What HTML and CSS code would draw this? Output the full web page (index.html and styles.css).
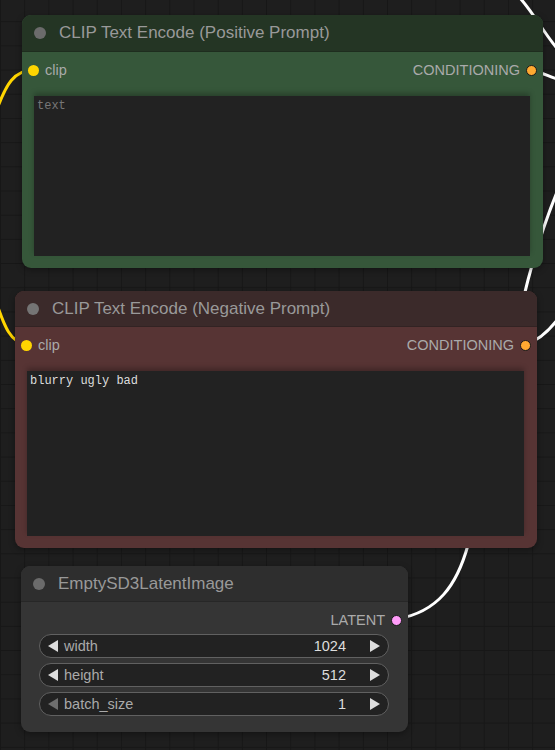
FILE: index.html
```html
<!DOCTYPE html>
<html lang="en">
<head>
   <meta charset="utf-8"/>
   <title>graph</title>
   <link rel="stylesheet" href="styles.css">
</head>
<body>
   <div class="canvas">
      <svg class="links" width="555" height="750" viewBox="0 0 555 750">
         <path class="link clip" d="M 34 70 C 14 70, 6 84, -4 112"/>
         <path class="link clip" d="M -6 296 C 2 318, 8 344, 27 344"/>
         <path class="link" d="M 520 -2 C 535 15, 545 35, 560 52"/>
         <path class="link" d="M 531 70 C 540 72, 548 76, 560 80"/>
         <path class="link" d="M 526 344 C 540 340, 550 330, 560 316"/>
         <path class="link" d="M 397 619 C 438 612, 457 585, 468 545 C 485 480, 515 330, 528 280 C 536 250, 545 220, 560 185"/>
      </svg>

      <div class="node green pos">
         <div class="title"><span class="knob"></span>CLIP Text Encode (Positive Prompt)</div>
         <div class="body">
            <div class="slots">
               <div class="slot"><i class="dot yellow"></i>clip</div>
               <div class="slot">CONDITIONING<i class="dot orange"></i></div>
            </div>
            <textarea class="prompt" placeholder="text"></textarea>
         </div>
      </div>

      <div class="node red neg">
         <div class="title"><span class="knob"></span>CLIP Text Encode (Negative Prompt)</div>
         <div class="body">
            <div class="slots">
               <div class="slot"><i class="dot yellow"></i>clip</div>
               <div class="slot">CONDITIONING<i class="dot orange"></i></div>
            </div>
            <textarea class="prompt">blurry ugly bad</textarea>
         </div>
      </div>

      <div class="node latent">
         <div class="title"><span class="knob"></span>EmptySD3LatentImage</div>
         <div class="body">
            <div class="slots">
               <div class="slot"></div>
               <div class="slot">LATENT<i class="dot pink"></i></div>
            </div>
            <div class="widgets">
               <div class="widget"><i class="arrow left"></i><span class="label">width</span><span class="value">1024</span><i class="arrow right"></i></div>
               <div class="widget"><i class="arrow left"></i><span class="label">height</span><span class="value">512</span><i class="arrow right"></i></div>
               <div class="widget"><i class="arrow left off"></i><span class="label">batch_size</span><span class="value">1</span><i class="arrow right"></i></div>
            </div>
         </div>
      </div>
   </div>
</body>
</html>
```

FILE: styles.css
```css
body {
   margin:0;
   background:#1d1d1d;
   font-family:"Liberation Sans",Arial,sans-serif;
   overflow:hidden;
}
.canvas {
   position:relative;
   width:555px;
   height:750px;
   overflow:hidden;
   background-color:#1e1e1e;
   background-image:
      linear-gradient(#171717 1px, transparent 1px),
      linear-gradient(90deg, #171717 1px, transparent 1px);
   background-size:24.2px 24.2px;
   background-position:0 -3px;
}
.links {
   position:absolute;
   left:0;
   top:0;
}
.link {
   fill:none;
   stroke:#fff;
   stroke-width:3;
   stroke-linecap:round;
}
.link.clip {
   stroke:#ffd500;
}

/* nodes */
.node {
   position:absolute;
   display:flex;
   flex-direction:column;
   border-radius:9px;
   overflow:hidden;
   background:#353535;
   box-shadow:0 2px 6px rgba(0,0,0,0.35);
}
.pos { left:22px; top:15px; width:521px; height:253px; }
.neg { left:15px; top:291px; width:522px; height:257px; }
.latent { left:21px; top:566px; width:387px; height:166px; }

.title {
   height:36px;
   flex:none;
   display:flex;
   align-items:center;
   padding-left:12px;
   font-size:17px;
   color:#999;
   background:#2e2e2e;
   border-bottom:1px solid rgba(0,0,0,0.15);
   box-sizing:border-box;
}
.pos .title { height:37px; }
.knob {
   width:12px;
   height:12px;
   border-radius:50%;
   background:#6b6b6b;
   margin-right:13px;
}
.green { background:#36573a; }
.green .title { background:#243524; }
.red { background:#573434; }
.red .title { background:#3b2a2a; }
.red .knob { background:#747474; }

.body {
   flex:1;
   display:flex;
   flex-direction:column;
   padding:6px 0 12px;
   min-height:0;
}
.slots {
   height:24px;
   display:flex;
   justify-content:space-between;
   align-items:center;
   font-size:14.5px;
   color:#aaa;
}
.slot {
   display:flex;
   align-items:center;
   gap:6px;
   margin:0 6px;
}
.dot {
   width:11px;
   height:11px;
   border-radius:50%;
   box-sizing:border-box;
}
.yellow { background:#ffd500; }
.orange { background:#ffa931; border:1px solid #1a1a1a; }
.pink { background:#ff9cf9; border:1px solid #1a1a1a; }

.prompt {
   flex:1;
   margin:14px 13px 0 12px;
   padding:3px;
   border:none;
   outline:none;
   resize:none;
   background:#222;
   color:#ddd;
   font-family:"Liberation Mono",monospace;
   font-size:12px;
   box-shadow:0 -3px 5px rgba(0,0,0,0.25);
}
.prompt::placeholder {
   color:#777;
}

/* widgets */
.widgets {
   display:flex;
   flex-direction:column;
   gap:5px;
   margin:2px 19px 0 18px;
}
.widget {
   height:24px;
   box-sizing:border-box;
   border:1px solid #616161;
   border-radius:12px;
   background:#222;
   display:flex;
   align-items:center;
   padding:0 8px;
   font-size:14.5px;
}
.label {
   flex:1;
   margin-left:6px;
   color:#aaa;
}
.value {
   color:#ddd;
   margin-right:24px;
}
.arrow {
   width:0;
   height:0;
   border-top:6px solid transparent;
   border-bottom:6px solid transparent;
}
.arrow.left { border-right:10px solid #ddd; }
.arrow.right { border-left:10px solid #ddd; }
.arrow.left.off { border-right-color:#6e6e6e; }
```
